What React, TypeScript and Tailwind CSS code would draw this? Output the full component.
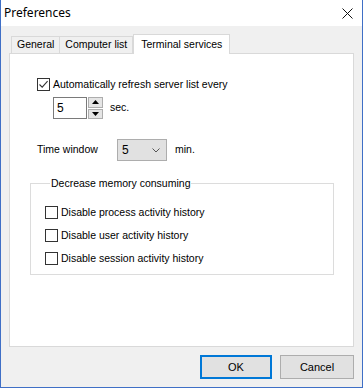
import React from 'react';

const font = { fontFamily: '"Liberation Sans", Arial, sans-serif' };

const CheckBox: React.FC<{ checked?: boolean; label: string }> = ({ checked, label }) => (
  <div className="flex items-center h-[13px]">
    <span className="w-[13px] h-[13px] border border-[#333333] bg-white flex items-center justify-center shrink-0">
      {checked && (
        <svg width="11" height="11" viewBox="0 0 11 11">
          <path d="M1.5 5.5 L4.2 8.2 L9.6 2.2" fill="none" stroke="#333333" strokeWidth="1.1" />
        </svg>
      )}
    </span>
    <span className="ml-[3px] text-[10.5px] text-black leading-none">{label}</span>
  </div>
);

const Tab: React.FC<{ label: string; active?: boolean; first?: boolean }> = ({ label, active, first }) =>
  active ? (
    <div className="h-[20px] -mb-px px-[7px] bg-white border border-b-0 border-[#d9d9d9] flex items-center text-[10.5px] text-black z-10">
      {label}
    </div>
  ) : (
    <div
      className={`h-[17px] mt-[2px] px-[5px] bg-[#f0f0f0] border border-b-0 border-[#d9d9d9] flex items-center text-[10.5px] text-black ${first ? '' : '-ml-px'}`}
    >
      {label}
    </div>
  );

const App: React.FC = () => {
  return (
    <div
      className="w-[363px] h-[388px] flex flex-col bg-[#f0f0f0] border-x border-b border-[#3f6fc6] overflow-hidden"
      style={font}
    >
      {/* title bar */}
      <div className="h-[26px] bg-white flex items-center justify-between pl-[3px] pr-[9px] shrink-0">
        <span className="text-[12px] text-black" style={{ fontFamily: '"Noto Sans", "Open Sans", sans-serif' }}>
          Preferences
        </span>
        <svg width="11" height="11" viewBox="0 0 11 11">
          <path d="M0.5 0.5 L10.5 10.5 M10.5 0.5 L0.5 10.5" stroke="#111" strokeWidth="1" />
        </svg>
      </div>

      <div className="flex-1 flex flex-col px-[8px] pt-[8px]">
        {/* tabs */}
        <div className="flex items-start ml-[2px] h-[19px]">
          <Tab label="General" first />
          <Tab label="Computer list" />
          <Tab label="Terminal services" active />
        </div>

        {/* panel */}
        <div className="h-[294px] bg-white border border-[#d9d9d9] pl-[27px] pt-[24px] pr-[18px] flex flex-col">
          <CheckBox checked label="Automatically refresh server list every" />

          <div className="flex items-center mt-[6px] ml-[16px]">
            <div className="w-[34px] h-[22px] border border-[#7a7a7a] bg-white flex items-center pl-[3px] text-[12px] text-black">
              5
            </div>
            <div className="ml-[1px] w-[15px] h-[22px] flex flex-col gap-px">
              <div className="flex-1 bg-[#e5e5e5] border border-[#adadad] flex items-center justify-center">
                <svg width="7" height="4" viewBox="0 0 7 4">
                  <path d="M3.5 0 L7 4 L0 4 Z" fill="#000" />
                </svg>
              </div>
              <div className="flex-1 bg-[#e5e5e5] border border-[#adadad] flex items-center justify-center">
                <svg width="7" height="4" viewBox="0 0 7 4">
                  <path d="M0 0 L7 0 L3.5 4 Z" fill="#000" />
                </svg>
              </div>
            </div>
            <span className="ml-[7px] text-[10.5px] text-black">sec.</span>
          </div>

          <div className="flex items-center mt-[20px]">
            <span className="w-[80px] text-[10.5px] text-black">Time window</span>
            <div className="w-[50px] h-[22px] bg-[#e1e1e1] border border-[#adadad] flex items-center justify-between pl-[4px] pr-[6px] text-[12px] text-black">
              5
              <svg width="8" height="5" viewBox="0 0 8 5">
                <path d="M0.5 0.5 L4 4 L7.5 0.5" fill="none" stroke="#555" strokeWidth="1" />
              </svg>
            </div>
            <span className="ml-[8px] text-[10.5px] text-black">min.</span>
          </div>

          <fieldset className="mt-[16px] -ml-[7px] w-[304px] h-[98px] border border-[#dcdcdc] pl-[14px] pt-[16px] flex flex-col gap-[10px]">
            <legend className="ml-[5px] px-[1px] text-[10.5px] text-black leading-[13px]">Decrease memory consuming</legend>
            <CheckBox label="Disable process activity history" />
            <CheckBox label="Disable user activity history" />
            <CheckBox label="Disable session activity history" />
          </fieldset>
        </div>

        {/* buttons */}
        <div className="flex justify-end gap-[8px] mt-[8px]">
          <button className="w-[72px] h-[24px] bg-[#e1e1e1] border-2 border-[#0078d7] text-[11px] text-black">OK</button>
          <button className="w-[74px] h-[24px] bg-[#e1e1e1] border border-[#adadad] text-[11px] text-black">Cancel</button>
        </div>
      </div>
    </div>
  );
};

export default App;
